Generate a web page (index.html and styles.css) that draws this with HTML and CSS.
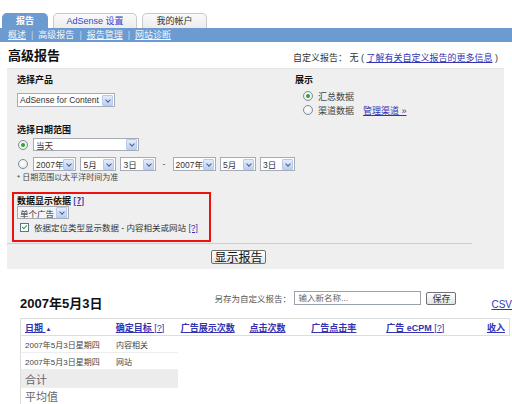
FILE: index.html
```html
<!DOCTYPE html>
<html lang="zh-CN">
<head>
<meta charset="utf-8">
<title>高级报告</title>
<link rel="stylesheet" href="styles.css">
</head>
<body>
<div class="tabs">
  <div class="tab tab-active">报告</div>
  <div class="tab tab-blue">AdSense 设置</div>
  <div class="tab">我的帐户</div>
</div>
<div class="navbar">
  <a class="navlink" href="#">概述</a><span class="sep">|</span><span class="navcur">高级报告</span><span class="sep">|</span><a class="navlink" href="#">报告管理</a><span class="sep">|</span><a class="navlink" href="#">网站诊断</a>
</div>
<div class="titlebar">
  <h1 class="title">高级报告</h1>
  <div class="custom">自定义报告： 无 ( <a href="#" class="link">了解有关自定义报告的更多信息</a> )</div>
</div>

<div class="panel">
  <div class="inner">
    <div class="cols">
      <div class="leftcol">
        <div class="label lbl-product">选择产品</div>
        <div class="sel sel-product"><span class="seltext">AdSense for Content</span><span class="arrow"></span></div>
        <div class="label lbl-date">选择日期范围</div>
        <div class="daterow row1">
          <span class="radio on"></span>
          <div class="sel sel-day"><span class="seltext">当天</span><span class="arrow"></span></div>
        </div>
        <div class="daterow row2">
          <span class="radio"></span>
          <div class="sel sel-y"><span class="seltext">2007年</span><span class="arrow"></span></div>
          <div class="sel sel-m"><span class="seltext">5月</span><span class="arrow"></span></div>
          <div class="sel sel-d"><span class="seltext">3日</span><span class="arrow"></span></div>
          <span class="dash">-</span>
          <div class="sel sel-y"><span class="seltext">2007年</span><span class="arrow"></span></div>
          <div class="sel sel-m"><span class="seltext">5月</span><span class="arrow"></span></div>
          <div class="sel sel-d"><span class="seltext">3日</span><span class="arrow"></span></div>
        </div>
        <div class="note">* 日期范围以太平洋时间为准</div>
      </div>
      <div class="rightcol">
        <div class="label">展示</div>
        <div class="optrow opt1"><span class="radio on"></span><span class="opttext">汇总数据</span></div>
        <div class="optrow"><span class="radio"></span><span class="opttext">渠道数据</span><a href="#" class="link mgr">管理渠道 »</a></div>
      </div>
    </div>
    <div class="redbox">
      <div class="label">数据显示依据 <a href="#" class="help">[?]</a></div>
      <div class="sel sel-basis"><span class="seltext">单个广告</span><span class="arrow"></span></div>
      <div class="checkrow"><span class="check"></span><span class="checktext">依据定位类型显示数据 - 内容相关或网站 <a href="#" class="help thin">[?]</a></span></div>
    </div>
  </div>
  <div class="btnrow"><span class="btn big">显示报告</span></div>
</div>

<div class="resulthead">
  <div class="reportdate">2007年5月3日</div>
  <div class="saveas">
    <span class="savelabel">另存为自定义报告：</span>
    <span class="input">输入新名称...</span>
    <span class="btn small">保存</span>
  </div>
  <a href="#" class="csv">CSV</a>
</div>

<div class="table">
  <div class="thead">
    <a href="#" class="th c1">日期 <span class="tri">▲</span></a>
    <a href="#" class="th c2">确定目标 <span class="q">[?]</span></a>
    <a href="#" class="th c3">广告展示次数</a>
    <a href="#" class="th c4">点击次数</a>
    <a href="#" class="th c5">广告点击率</a>
    <a href="#" class="th c6">广告 eCPM <span class="q">[?]</span></a>
    <a href="#" class="th c7">收入</a>
  </div>
  <div class="tbody">
    <div class="tr"><span class="td c1">2007年5月3日星期四</span><span class="td c2">内容相关</span></div>
    <div class="tr"><span class="td c1">2007年5月3日星期四</span><span class="td c2">网站</span></div>
    <div class="tr total"><span class="td">合计</span></div>
    <div class="tr avg"><span class="td">平均值</span></div>
  </div>
</div>
</body>
</html>
```

FILE: styles.css
```css
* { box-sizing: border-box; }
html, body { margin: 0; padding: 0; background: #fff; }
body {
  width: 512px;
  height: 404px;
  overflow: hidden;
  font-family: "Liberation Sans", "Noto Sans CJK SC", sans-serif;
  font-size: 9px;
  color: #333;
}
a { color: #3333b3; }

.tabs {
  display: flex;
  gap: 5px;
  padding: 13px 0 0 2px;
  height: 28px;
}
.tab {
  height: 15px;
  width: 65px;
  border: 1px solid #c9c9c9;
  border-bottom: none;
  border-radius: 5px 5px 0 0;
  background: linear-gradient(#fafafa, #ececec);
  font-size: 9px;
  line-height: 14px;
  text-align: center;
  color: #333;
}
.tab-active {
  width: 46px;
  background: #6b9bd0;
  border-color: #6b9bd0;
  color: #fff;
  font-weight: bold;
}
.tab-blue { width: 84px; color: #3344cc; }

.navbar {
  height: 14px;
  background: #6b9bd0;
  padding-left: 8px;
  font-size: 9px;
  line-height: 14px;
  color: #e8eef8;
  display: flex;
}
.navlink { color: #f2f5fb; }
.navcur { color: #f2f5fb; }
.sep { margin: 0 5px; color: #c8d8ee; }

.titlebar {
  height: 26px;
  display: flex;
  justify-content: space-between;
  align-items: center;
  padding: 0 14px 0 8px;
}
.title {
  margin: 0;
  font-size: 13px;
  font-weight: bold;
  color: #111;
  font-family: "Noto Sans CJK SC", sans-serif;
  padding-bottom: 2px;
}
.custom { font-size: 9px; color: #333; padding-top: 4px; }
.link { color: #3333b3; }

.panel {
  margin-left: 7px;
  width: 497px;
  background: #efefef;
  padding: 0 0 5px 0;
  border-top: 1px solid #e2e2e2;
}
.inner {
  width: 465px;
  padding: 0 0 1px 5px;
  border-bottom: 1px solid #cfcfcf;
}
.cols { display: flex; }
.leftcol { width: 283px; padding-left: 5px; }
.rightcol { padding-top: 5px; }

.label {
  font-size: 9px;
  font-weight: bold;
  line-height: 12px;
  color: #111;
  font-family: "Noto Sans CJK SC", sans-serif;
}
.lbl-product { margin-top: 5px; }
.lbl-date { margin-top: 17px; }

.sel {
  display: flex;
  align-items: center;
  justify-content: space-between;
  height: 14px;
  background: #fff;
  border: 1px solid #a5acb5;
  padding: 0 1px 0 2px;
  font-size: 8.5px;
  color: #333;
}
.seltext { white-space: nowrap; }
.arrow {
  width: 11px;
  height: 11px;
  flex: none;
  border: 1px solid #b8c9ec;
  border-radius: 1px;
  background: linear-gradient(#e4ecfb, #bccff3);
  position: relative;
}
.arrow::after {
  content: "";
  position: absolute;
  left: 3px;
  top: 2px;
  width: 3px;
  height: 3px;
  border-right: 1.5px solid #4c5f86;
  border-bottom: 1.5px solid #4c5f86;
  transform: rotate(45deg);
}
.sel-product { width: 98px; margin-top: 7px; }
.sel-day { width: 106px; height: 13px; }
.sel-y { width: 44px; }
.sel-m { width: 37px; }
.sel-d { width: 36px; }
.sel-basis { width: 52px; height: 13px; background: #f4f4f4; }

.daterow { display: flex; align-items: center; gap: 4px; }
.row1 { margin-top: 2px; }
.row2 { margin-top: 6px; }
.dash { margin: 0 3px; color: #555; font-size: 9px; }

.radio {
  width: 10px;
  height: 10px;
  border-radius: 50%;
  border: 1px solid #7f8a96;
  background: radial-gradient(circle at 40% 40%, #ffffff, #e3e3e3);
  flex: none;
  position: relative;
  margin: 0 1px 0 1px;
}
.radio.on::after {
  content: "";
  position: absolute;
  left: 2px;
  top: 2px;
  width: 4px;
  height: 4px;
  border-radius: 50%;
  background: #2ba62b;
}
.note { margin-top: 2px; font-size: 8px; line-height: 10px; color: #444; }

.optrow { display: flex; align-items: center; margin-top: 4px; padding-left: 8px; height: 10px; }
.opt1 { margin-top: 5px; }
.optrow .radio { margin: 0 5px 0 0; }
.opttext { font-size: 9px; color: #444; }
.mgr { margin-left: 9px; font-size: 9px; }

.redbox {
  margin-top: 9px;
  width: 199px;
  height: 50px;
  border: 2px solid #ee1111;
  padding: 1px 3px 0 3px;
}
.redbox .label { line-height: 11px; }
.help { color: #3333b3; }
.help.thin { font-weight: normal; }
.checkrow { display: flex; align-items: center; margin-top: 2px; padding-left: 3px; }
.check {
  width: 9px;
  height: 9px;
  border: 1px solid #5b7593;
  background: #fff;
  position: relative;
  flex: none;
  margin-right: 5px;
}
.check::after {
  content: "";
  position: absolute;
  left: 2px;
  top: 0px;
  width: 2px;
  height: 4px;
  border-right: 1.5px solid #2aa52a;
  border-bottom: 1.5px solid #2aa52a;
  transform: rotate(45deg);
}
.checktext { font-size: 8.5px; color: #333; white-space: nowrap; }

.btnrow { width: 465px; display: flex; justify-content: center; margin-top: 6px; }
.btn {
  display: inline-block;
  height: 14px;
  padding: 0 4px;
  border: 1px solid #707070;
  border-radius: 2px;
  background: linear-gradient(#ffffff, #e4e4e4);
  font-size: 12px;
  line-height: 12px;
  color: #111;
  white-space: nowrap;
  font-family: "Noto Sans CJK SC", sans-serif;
}
.btn.big { padding: 0 2px; font-size: 12px; margin-left: -2px; }
.btn.small {
  font-size: 9px;
  height: 13px;
  line-height: 11px;
  padding: 0 5px;
  color: #333;
}

.resulthead {
  height: 49px;
  display: flex;
  align-items: flex-start;
  padding: 22px 0 0 20px;
}
.reportdate {
  font-size: 13px;
  font-weight: bold;
  color: #111;
  width: 198px;
  padding-top: 2px;
}
.saveas { display: flex; align-items: center; }
.savelabel { font-size: 8.5px; color: #555; width: 80px; }
.input {
  width: 127px;
  height: 14px;
  border: 1px solid #9aa3ad;
  background: #fff;
  font-size: 8.5px;
  color: #666;
  line-height: 12px;
  padding-left: 3px;
  margin-right: 5px;
}
.csv { font-size: 10px; margin-left: 35px; margin-top: 8px; color: #3333b3; }

.table {
  margin-left: 20px;
  width: 490px;
  border-left: 1px solid #dddddd;
}
.thead {
  height: 18px;
  display: flex;
  align-items: center;
  border-top: 1px solid #dddddd;
  border-bottom: 1px solid #dddddd;
  border-right: 1px solid #dddddd;
}
.th {
  font-size: 9px;
  font-weight: bold;
  color: #3333b3;
  padding-left: 4px;
  white-space: nowrap;
}
.th .q { font-weight: normal; }
.tri { font-size: 6px; display: inline-block; }
.c1 { width: 91px; }
.c2 { width: 65px; }
.c3 { width: 69px; }
.c4 { width: 62px; }
.c5 { width: 75px; }
.c6 { width: 101px; }
.c7 { flex: 1; text-align: right; padding-right: 4px; }

.tbody { width: 157px; }
.tr {
  height: 17px;
  display: flex;
  align-items: center;
  border-bottom: 1px solid #eeeeee;
}
.td { font-size: 8px; color: #444; padding-left: 4px; white-space: nowrap; }
.td.c2 { width: 66px; }
.total { background: #ececec; height: 18px; }
.total .td, .avg .td { font-size: 11px; color: #666; }
```
